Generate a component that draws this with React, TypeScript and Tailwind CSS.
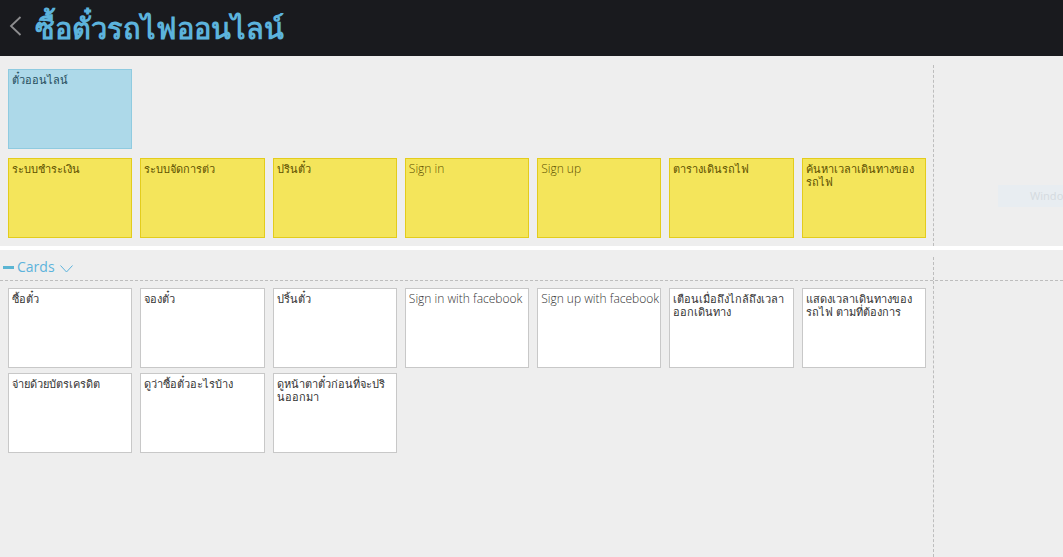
import React from "react";

type Tone = "blue" | "yellow" | "white";

const tones: Record<Tone, string> = {
  blue: "border-[#8fcbe0] bg-[#add9e9] text-[#1f4c5c]",
  yellow: "border-[#e3cc1c] bg-[#f4e55b] text-[#5c5000]",
  white: "border-[#c8c8c8] bg-white text-[#333333]",
};

const isLatin = (text: string) => /^[A-Za-z ]+$/.test(text);

function Card({ text, tone }: { text: string; tone: Tone }) {
  const size = isLatin(text) ? "text-[12px] font-light font-['Open_Sans','Noto_Sans',sans-serif]" : "text-[11px]";
  return (
    <li className={`h-20 overflow-hidden border pt-[3px] pl-[3px] leading-[13px] whitespace-pre-line ${size} ${tones[tone]}`}>
      {text}
    </li>
  );
}

const steps = ["ระบบชำระเงิน", "ระบบจัดการต่ว", "ปรินตั๋ว", "Sign in", "Sign up", "ตารางเดินรถไฟ", "ค้นหาเวลาเดินทางของ\nรถไฟ"];

const cards = [
  "ซื้อตั๋ว",
  "จองตั๋ว",
  "ปริ้นตั๋ว",
  "Sign in with facebook",
  "Sign up with facebook",
  "เตือนเมื่อถึงไกล้ถึงเวลา\nออกเดินทาง",
  "แสดงเวลาเดินทางของ\nรถไฟ ตามที่ต้องการ",
  "จ่ายด้วยบัตรเครดิต",
  "ดูว่าซื้อตั๋วอะไรบ้าง",
  "ดูหน้าตาตั๋วก่อนที่จะปริ\nนออกมา",
];

function Grid({ items, tone }: { items: string[]; tone: Tone }) {
  return (
    <ul className="grid grid-cols-7 gap-x-2 gap-y-[5px]">
      {items.map((text) => (
        <Card key={text} text={text} tone={tone} />
      ))}
    </ul>
  );
}

export default function App() {
  return (
    <div className="flex min-h-screen flex-col bg-[#eeeeee] font-['Noto_Sans','Liberation_Sans',sans-serif]">
      <header className="flex h-14 items-center gap-[11px] bg-[#191a1e] pl-2 text-[#5cb3dc]">
        <button type="button" aria-label="Back" className="-mt-1 text-[#8d8d8f]">
          <svg width="16" height="22" viewBox="0 0 16 22" fill="none" stroke="currentColor" strokeWidth="1.8">
            <path d="M12.500 2 3 11l9.500 9" />
          </svg>
        </button>
        <h1 className="text-[29px] leading-10 font-semibold">ซื้อตั๋วรถไฟออนไลน์</h1>
      </header>

      <section className="flex border-b-4 border-white pt-[9px]">
        <div className="flex flex-1 flex-col gap-[9px] pt-1 pr-[7px] pb-2 pl-2">
          <Grid items={["ตั๋วออนไลน์"]} tone="blue" />
          <Grid items={steps} tone="yellow" />
        </div>
        <div className="w-[130px] border-l border-dashed border-[#bdbdbd]">
          <div className="mt-[120px] ml-16 h-[22px] bg-[#e8edf1] pl-8 text-[11px] leading-[22px] text-[#d5dbe0]">
            Windo
          </div>
        </div>
      </section>

      <section className="flex flex-1 flex-col">
        <div className="flex h-[31px] border-b border-dashed border-[#bdbdbd]">
          <h2 className="flex flex-1 items-center pl-[3px] text-[#5cb3dc]">
            <button type="button" className="flex items-center gap-[3px] pt-1 text-[14px] leading-5">
              <span className="h-[3px] w-[11px] bg-[#5bb5d3]" />
              <span className="font-['Open_Sans','Noto_Sans',sans-serif]">Cards</span>
              <svg className="mt-[3px] ml-[2px]" width="13" height="8" viewBox="0 0 13 8" fill="none" stroke="currentColor">
                <path d="m.5.5 6 6.500 6-6.500" />
              </svg>
            </button>
          </h2>
          <div className="mt-[7px] w-[130px] border-l border-dashed border-[#bdbdbd]" />
        </div>
        <div className="flex flex-1">
          <div className="flex-1 pt-[7px] pr-[7px] pl-2">
            <Grid items={cards} tone="white" />
          </div>
          <div className="w-[130px] border-l border-dashed border-[#bdbdbd]" />
        </div>
      </section>
    </div>
  );
}
